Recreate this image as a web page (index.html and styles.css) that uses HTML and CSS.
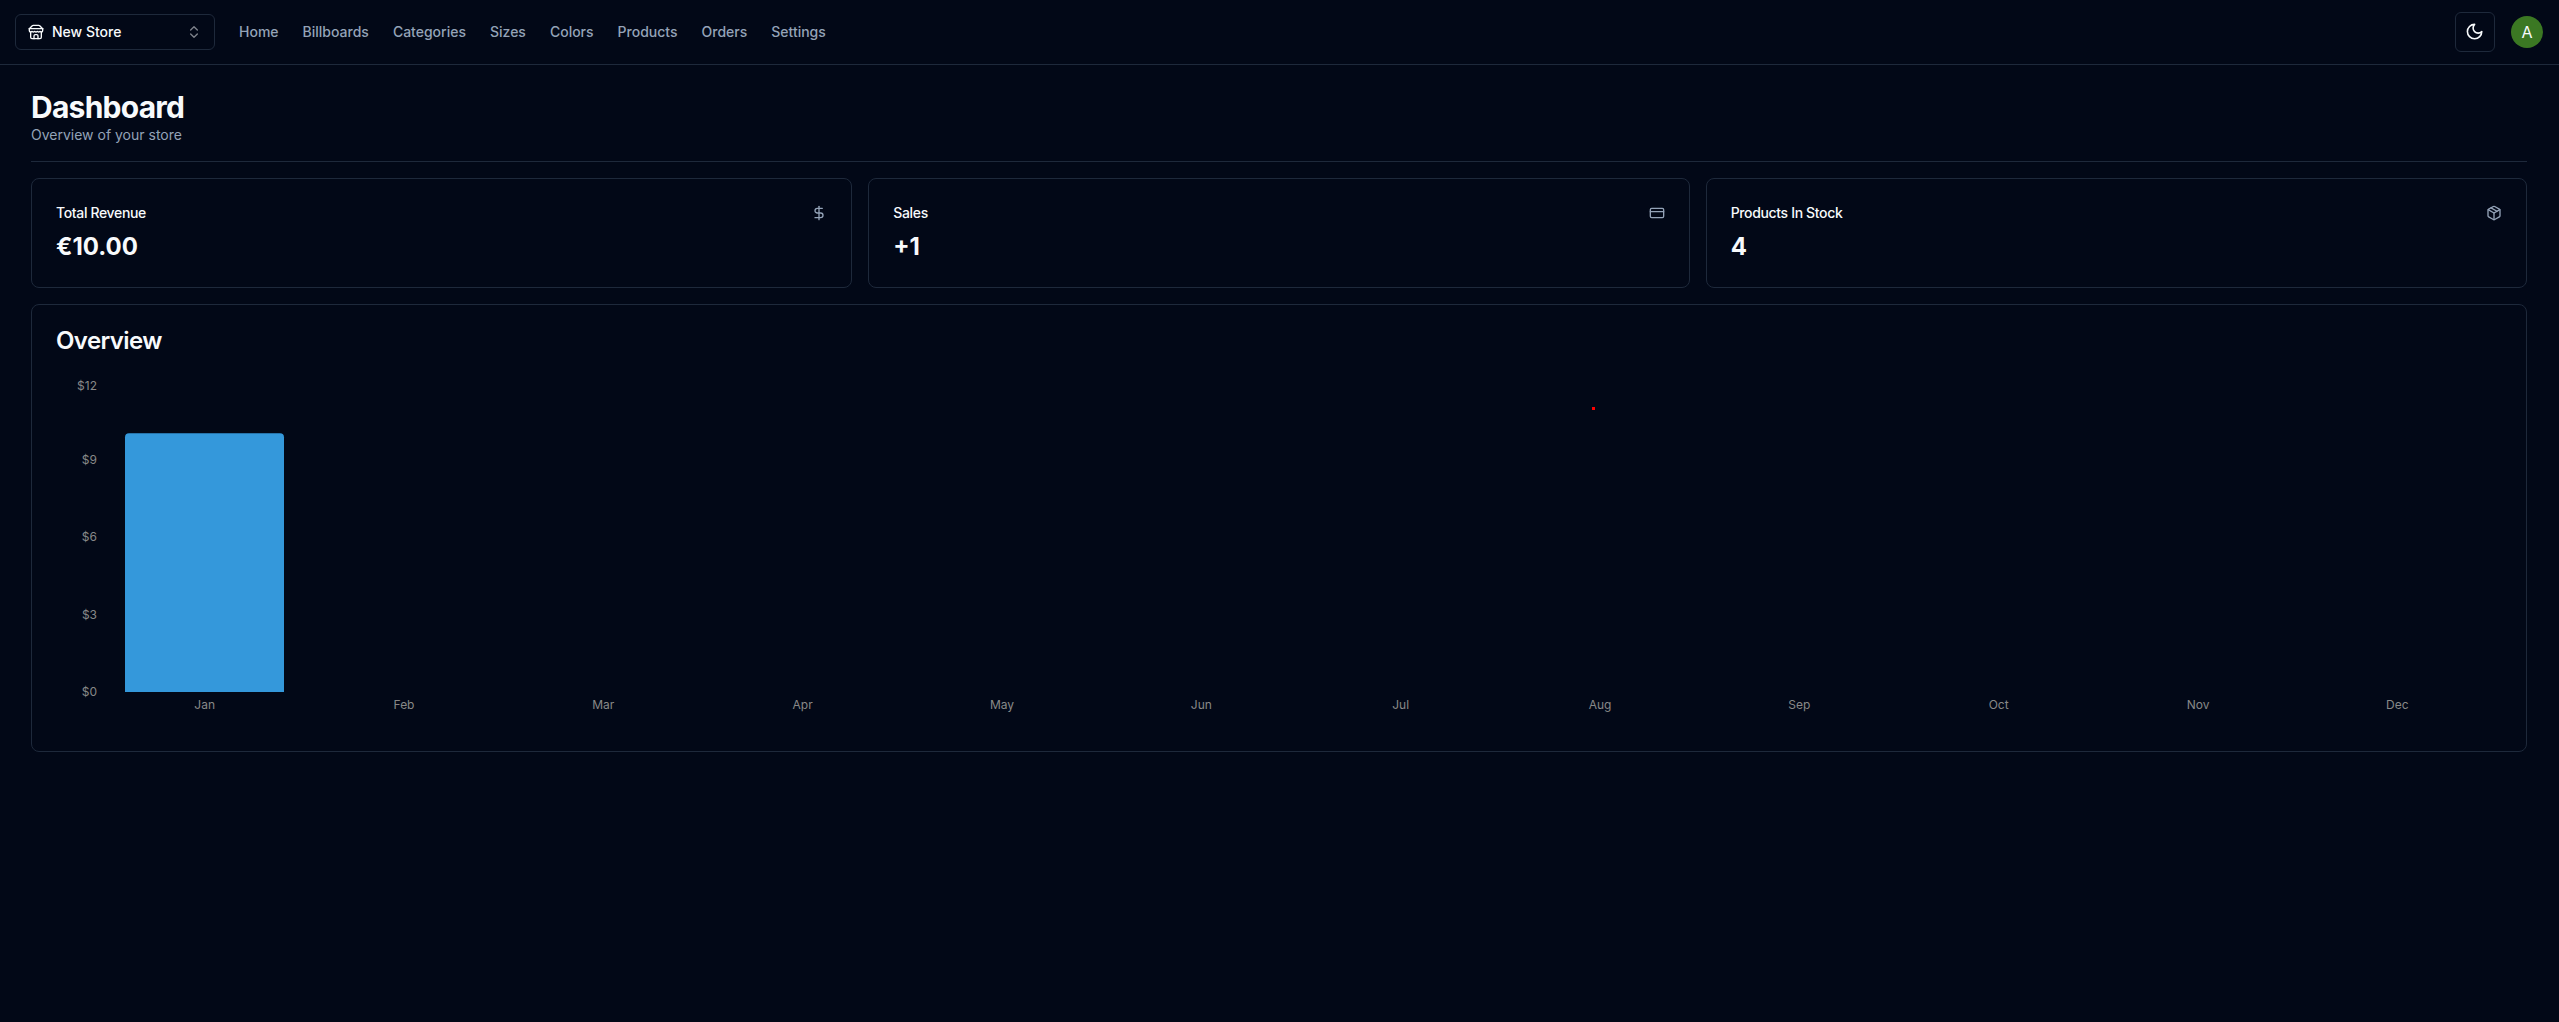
FILE: index.html
```html
<!DOCTYPE html>
<html lang="en">
<head>
<meta charset="utf-8">
<title>Dashboard</title>
<link rel="stylesheet" href="styles.css">
</head>
<body>
<header class="navbar">
  <button class="switcher">
    <svg class="icon icon-mr" viewBox="0 0 24 24"><path d="m2 7 4.41-4.41A2 2 0 0 1 7.83 2h8.34a2 2 0 0 1 1.42.59L22 7"/><path d="M4 12v8a2 2 0 0 0 2 2h12a2 2 0 0 0 2-2v-8"/><path d="M15 22v-4a2 2 0 0 0-2-2h-2a2 2 0 0 0-2 2v4"/><path d="M2 7h20"/><path d="M22 7v3a2 2 0 0 1-2 2 2.7 2.7 0 0 1-1.59-.63.7.7 0 0 0-.82 0A2.7 2.7 0 0 1 16 12a2.7 2.7 0 0 1-1.59-.63.7.7 0 0 0-.82 0A2.7 2.7 0 0 1 12 12a2.7 2.7 0 0 1-1.59-.63.7.7 0 0 0-.82 0A2.7 2.7 0 0 1 8 12a2.7 2.7 0 0 1-1.59-.63.7.7 0 0 0-.82 0A2.7 2.7 0 0 1 4 12a2 2 0 0 1-2-2V7"/></svg>
    <span class="switcher-label">New Store</span>
    <svg class="icon icon-faded" viewBox="0 0 24 24"><path d="m7 15 5 5 5-5"/><path d="m7 9 5-5 5 5"/></svg>
  </button>
  <nav class="nav">
    <a class="nav-link">Home</a>
    <a class="nav-link">Billboards</a>
    <a class="nav-link">Categories</a>
    <a class="nav-link">Sizes</a>
    <a class="nav-link">Colors</a>
    <a class="nav-link">Products</a>
    <a class="nav-link">Orders</a>
    <a class="nav-link">Settings</a>
  </nav>
  <div class="nav-right">
    <button class="theme-btn">
      <svg class="icon-moon" viewBox="0 0 24 24"><path d="M12 3a6 6 0 0 0 9 9 9 9 0 1 1-9-9Z"/></svg>
    </button>
    <div class="avatar">A</div>
  </div>
</header>

<main class="page">
  <div class="heading">
    <h1 class="title">Dashboard</h1>
    <p class="subtitle">Overview of your store</p>
  </div>
  <hr class="separator">

  <section class="stats">
    <article class="card stat">
      <div class="stat-head">
        <h3 class="stat-title">Total Revenue</h3>
        <svg class="icon icon-muted" viewBox="0 0 24 24"><path d="M12 2v20"/><path d="M17 5H9.5a3.5 3.5 0 0 0 0 7h5a3.5 3.5 0 0 1 0 7H6"/></svg>
      </div>
      <div class="stat-value">€10.00</div>
    </article>
    <article class="card stat">
      <div class="stat-head">
        <h3 class="stat-title">Sales</h3>
        <svg class="icon icon-muted" viewBox="0 0 24 24"><rect x="2" y="5" width="20" height="14" rx="2"/><path d="M2 10h20"/></svg>
      </div>
      <div class="stat-value">+1</div>
    </article>
    <article class="card stat">
      <div class="stat-head">
        <h3 class="stat-title">Products In Stock</h3>
        <svg class="icon icon-muted" viewBox="0 0 24 24"><path d="m7.5 4.27 9 5.15"/><path d="M21 8a2 2 0 0 0-1-1.73l-7-4a2 2 0 0 0-2 0l-7 4A2 2 0 0 0 3 8v8a2 2 0 0 0 1 1.73l7 4a2 2 0 0 0 2 0l7-4A2 2 0 0 0 21 16Z"/><path d="m3.3 7 8.7 5 8.7-5"/><path d="M12 22V12"/></svg>
      </div>
      <div class="stat-value">4</div>
    </article>
  </section>

  <section class="card overview">
    <h2 class="overview-title">Overview</h2>
    <svg class="chart" viewBox="0 0 2462 350">
      <path class="bar" d="M85 315V60.3a4 4 0 0 1 4-4H240a4 4 0 0 1 4 4V315Z"/>
      <rect class="dot" x="1552" y="30" width="3" height="3"/>
      <g class="y-axis">
        <text x="57" y="13">$12</text>
        <text x="57" y="87">$9</text>
        <text x="57" y="164">$6</text>
        <text x="57" y="242">$3</text>
        <text x="57" y="319">$0</text>
      </g>
      <g class="x-axis">
        <text x="164.67" y="332">Jan</text>
        <text x="364" y="332">Feb</text>
        <text x="563.33" y="332">Mar</text>
        <text x="762.67" y="332">Apr</text>
        <text x="962" y="332">May</text>
        <text x="1161.33" y="332">Jun</text>
        <text x="1360.67" y="332">Jul</text>
        <text x="1560" y="332">Aug</text>
        <text x="1759.33" y="332">Sep</text>
        <text x="1958.67" y="332">Oct</text>
        <text x="2158" y="332">Nov</text>
        <text x="2357.33" y="332">Dec</text>
      </g>
    </svg>
  </section>
</main>
</body>
</html>
```

FILE: styles.css
```css
* { box-sizing: border-box; }

html, body { height: 100%; }

body {
  margin: 0;
  background: #020817;
  color: #f8fafc;
  font-family: Inter, "Liberation Sans", sans-serif;
  font-size: 14px;
  line-height: 20px;
  overflow: hidden;
}

.icon {
  width: 16px;
  height: 16px;
  flex: none;
  fill: none;
  stroke: currentColor;
  stroke-width: 2;
  stroke-linecap: round;
  stroke-linejoin: round;
}

.icon-mr { margin-right: 8px; }
.icon-faded { opacity: .5; margin-left: auto; }
.icon-muted { color: #94a3b8; }

.navbar {
  display: flex;
  align-items: center;
  height: 65px;
  padding: 0 16px 0 15px;
  border-bottom: 1px solid #1e293b;
}

.switcher {
  display: flex;
  align-items: center;
  width: 200px;
  height: 36px;
  padding: 0 12px;
  background: transparent;
  border: 1px solid #1e293b;
  border-radius: 6px;
  color: #f8fafc;
  font: 500 14px/20px Inter, "Liberation Sans", sans-serif;
}

.nav {
  display: flex;
  align-items: center;
  gap: 24px;
  margin-left: 24px;
}

.nav-link {
  color: #94a3b8;
  font-weight: 500;
}

.nav-right {
  display: flex;
  align-items: center;
  gap: 16px;
  margin-left: auto;
}

.theme-btn {
  display: flex;
  align-items: center;
  justify-content: center;
  width: 40px;
  height: 40px;
  padding: 0;
  background: transparent;
  border: 1px solid #1e293b;
  border-radius: 6px;
  color: #f8fafc;
}

.icon-moon {
  width: 19.2px;
  height: 19.2px;
  fill: none;
  stroke: currentColor;
  stroke-width: 2;
  stroke-linecap: round;
  stroke-linejoin: round;
}

.avatar {
  display: flex;
  align-items: center;
  justify-content: center;
  width: 32px;
  height: 32px;
  border-radius: 50%;
  background: #3b7823;
  color: #f8fafc;
  font-size: 16px;
}

.page {
  display: flex;
  flex-direction: column;
  gap: 16px;
  padding: 24px 32px 32px 31px;
}

.title {
  margin: 0;
  font-size: 30px;
  line-height: 36px;
  font-weight: 700;
  letter-spacing: -.75px;
}

.subtitle {
  margin: 0;
  color: #94a3b8;
}

.separator {
  width: 100%;
  height: 1px;
  margin: 0;
  border: 0;
  background: #1e293b;
}

.stats {
  display: grid;
  grid-template-columns: repeat(3, 1fr);
  gap: 16px;
}

.card {
  border: 1px solid #1e293b;
  border-radius: 8px;
  background: #020817;
}

.stat { padding: 24px; }

.stat-head {
  display: flex;
  align-items: center;
  justify-content: space-between;
  padding-bottom: 8px;
}

.stat-title {
  margin: 0;
  font-size: 14px;
  line-height: 20px;
  font-weight: 500;
  letter-spacing: -.35px;
}

.stat-value {
  font-size: 24px;
  line-height: 32px;
  font-weight: 700;
}

.overview { padding: 24px 24px 24px 8px; }

.overview-title {
  margin: 0 0 24px 16px;
  font-size: 24px;
  line-height: 24px;
  font-weight: 600;
  letter-spacing: -.6px;
}

.chart {
  display: block;
  width: 2462px;
  height: 350px;
  font-size: 12px;
}

.bar { fill: #3498db; }
.dot { fill: #ff0000; }
.y-axis text { fill: #888888; text-anchor: end; }
.x-axis text { fill: #888888; text-anchor: middle; }
```
